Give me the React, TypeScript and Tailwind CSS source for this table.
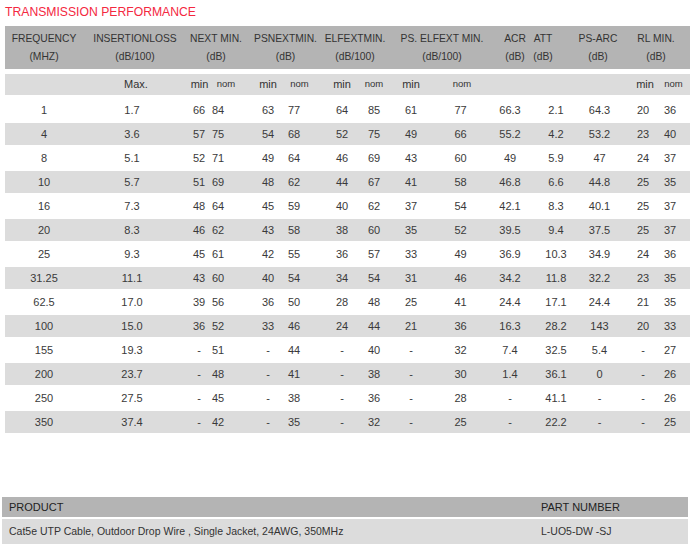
import React from "react";

const headerCols: { l1: string; l2: string; cls: string }[] = [
  { l1: "FREQUENCY", l2: "(MHZ)", cls: "pr-[1px]" },
  { l1: "INSERTIONLOSS", l2: "(dB/100)", cls: "pl-[2px]" },
  { l1: "NEXT MIN.", l2: "(dB)", cls: "" },
  { l1: "PSNEXTMIN.", l2: "(dB)", cls: "" },
  { l1: "ELFEXTMIN.", l2: "(dB/100)", cls: "pr-[3px]" },
  { l1: "PS. ELFEXT MIN.", l2: "(dB/100)", cls: "" },
  { l1: "ACR", l2: "(dB)", cls: "pl-[6px]" },
  { l1: "ATT", l2: "(dB)", cls: "pr-[8px]" },
  { l1: "PS-ARC", l2: "(dB)", cls: "pl-[4px]" },
  { l1: "RL MIN.", l2: "(dB)", cls: "pr-[6px]" },
];

const dataCellCls = [
  "pr-[5px]",
  "pl-[10px]",
  "pl-[23px]",
  "pr-[16px]",
  "pl-[12px]",
  "pr-[11px]",
  "pl-[8px]",
  "pr-[2px]",
  "pr-[6px]",
  "",
  "pl-[2px]",
  "pl-[1px]",
  "",
  "pl-[8px]",
  "pr-[7px]",
];

const subCells: { t: string; cls: string }[] = [
  { t: "", cls: "" },
  { t: "Max.", cls: "pl-[18px] text-[11px]" },
  { t: "min", cls: "pl-[24px] text-[11px]" },
  { t: "nom", cls: "text-[9.5px]" },
  { t: "min", cls: "pl-[12px] text-[11px]" },
  { t: "nom", cls: "text-[9.5px]" },
  { t: "min", cls: "pl-[8px] text-[11px]" },
  { t: "nom", cls: "pr-[2px] text-[9.5px]" },
  { t: "min", cls: "pr-[6px] text-[11px]" },
  { t: "nom", cls: "pl-[3px] text-[9.5px]" },
  { t: "", cls: "" },
  { t: "", cls: "" },
  { t: "", cls: "" },
  { t: "min", cls: "pl-[12px] text-[11px]" },
  { t: "nom", cls: "text-[9.5px]" },
];

const rows: string[][] = [
  ["1", "1.7", "66", "84", "63", "77", "64", "85", "61", "77", "66.3", "2.1", "64.3", "20", "36"],
  ["4", "3.6", "57", "75", "54", "68", "52", "75", "49", "66", "55.2", "4.2", "53.2", "23", "40"],
  ["8", "5.1", "52", "71", "49", "64", "46", "69", "43", "60", "49", "5.9", "47", "24", "37"],
  ["10", "5.7", "51", "69", "48", "62", "44", "67", "41", "58", "46.8", "6.6", "44.8", "25", "35"],
  ["16", "7.3", "48", "64", "45", "59", "40", "62", "37", "54", "42.1", "8.3", "40.1", "25", "37"],
  ["20", "8.3", "46", "62", "43", "58", "38", "60", "35", "52", "39.5", "9.4", "37.5", "25", "37"],
  ["25", "9.3", "45", "61", "42", "55", "36", "57", "33", "49", "36.9", "10.3", "34.9", "24", "36"],
  ["31.25", "11.1", "43", "60", "40", "54", "34", "54", "31", "46", "34.2", "11.8", "32.2", "23", "35"],
  ["62.5", "17.0", "39", "56", "36", "50", "28", "48", "25", "41", "24.4", "17.1", "24.4", "21", "35"],
  ["100", "15.0", "36", "52", "33", "46", "24", "44", "21", "36", "16.3", "28.2", "143", "20", "33"],
  ["155", "19.3", "-", "51", "-", "44", "-", "40", "-", "32", "7.4", "32.5", "5.4", "-", "27"],
  ["200", "23.7", "-", "48", "-", "41", "-", "38", "-", "30", "1.4", "36.1", "0", "-", "26"],
  ["250", "27.5", "-", "45", "-", "38", "-", "36", "-", "28", "-", "41.1", "-", "-", "26"],
  ["350", "37.4", "-", "42", "-", "35", "-", "32", "-", "25", "-", "22.2", "-", "-", "25"],
];

const dataGrid =
  "grid grid-cols-[83px_78px_43px_34px_38px_37px_40px_34px_44px_49px_48px_45px_43px_36px_33px] items-center h-full";

export default function App() {
  return (
    <div
      className="w-[698px] h-[551px] bg-white text-[#3a3a3a]"
      style={{ fontFamily: '"Liberation Sans", Arial, sans-serif' }}
    >
      <div className="pt-[5px] pl-[5px] h-[26px]">
        <div className="text-[12.2px] leading-[14px] text-[#f4283f] whitespace-nowrap">
          TRANSMISSION PERFORMANCE
        </div>
      </div>

      <div className="ml-[5px] w-[685px]">
        {/* header */}
        <div className="grid grid-cols-[79px_100px_64px_75px_67px_104px_36px_34px_64px_62px] bg-[#b4b4b4] pt-[4px] pb-[3px] text-[10.3px] leading-[18px] text-[#333333]">
          {headerCols.map((h, i) => (
            <div key={i} className={`text-center whitespace-nowrap ${h.cls}`}>
              <div>{h.l1}</div>
              <div>{h.l2}</div>
            </div>
          ))}
        </div>

        {/* sub header */}
        <div className="mt-[5px] h-[21px] bg-[#dcdcdc] mb-[3px]">
          <div className={dataGrid}>
            {subCells.map((c, i) => (
              <div key={i} className={`text-center whitespace-nowrap text-[#333333] ${c.cls}`}>
                {c.t}
              </div>
            ))}
          </div>
        </div>

        {/* rows */}
        <div className="flex flex-col">
          {rows.map((r, ri) => (
            <div key={ri} className="h-[24px] py-[1px]">
              <div className={`h-full ${ri % 2 === 1 ? "bg-[#dcdcdc]" : ""}`}>
                <div className={`${dataGrid} text-[11px]`}>
                  {r.map((v, ci) => (
                    <div key={ci} className={`text-center whitespace-nowrap ${dataCellCls[ci]}`}>
                      {v}
                    </div>
                  ))}
                </div>
              </div>
            </div>
          ))}
        </div>
      </div>

      {/* product */}
      <div className="mt-[63px] ml-[2px] w-[686px]">
        <div className="grid grid-cols-[532px_1fr] items-center h-[20px] bg-[#b4b4b4] text-[#222222] text-[11px]">
          <div className="pl-[7px]">PRODUCT</div>
          <div className="pl-[7px]">PART NUMBER</div>
        </div>
        <div className="mt-[2px] grid grid-cols-[532px_1fr] items-center h-[25px] bg-[#dcdcdc] text-[#333333] text-[10.5px]">
          <div className="pl-[7px] whitespace-nowrap">
            Cat5e UTP Cable, Outdoor Drop Wire , Single Jacket, 24AWG, 350MHz
          </div>
          <div className="pl-[7px]">L-UO5-DW -SJ</div>
        </div>
      </div>
    </div>
  );
}
